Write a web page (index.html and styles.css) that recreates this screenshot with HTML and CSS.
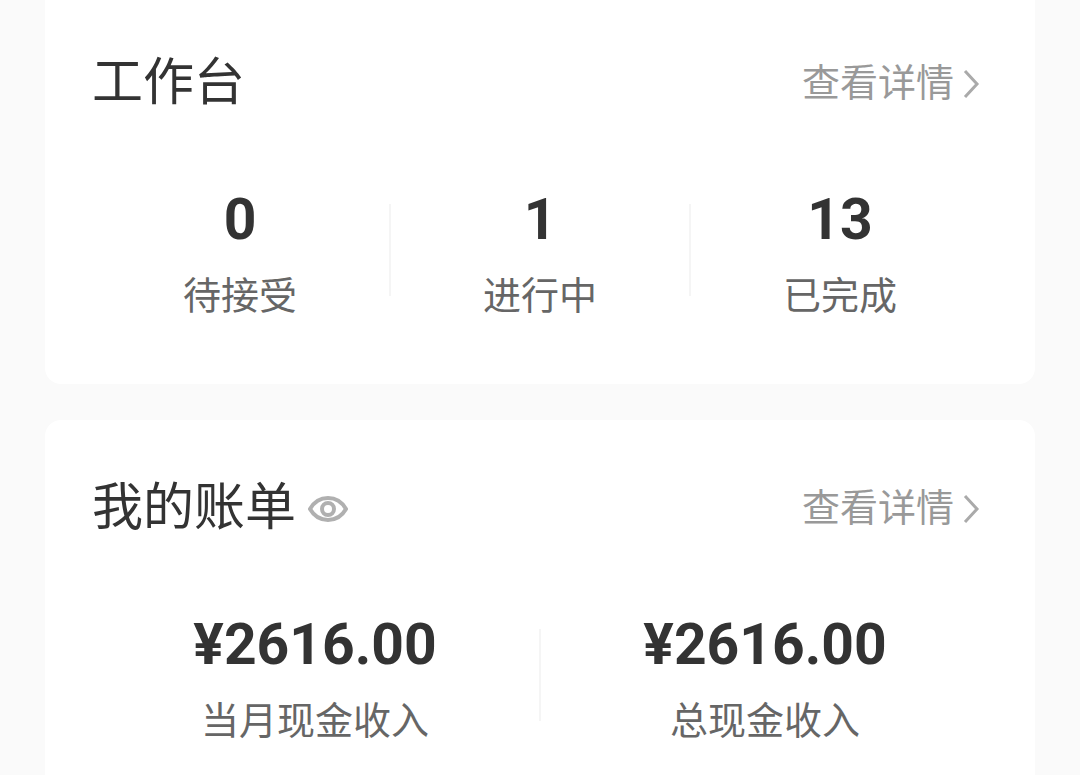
FILE: index.html
```html
<!DOCTYPE html>
<html lang="zh-CN">
<head>
    <meta charset="UTF-8">
    <meta name="viewport" content="width=device-width, initial-scale=1.0">
    <title>工作台</title>
    <link rel="stylesheet" href="styles.css">
</head>
<body>
    <main>
        <section class="card">
            <div class="card-header">
                <h2>工作台</h2>
                <a class="more" href="#">查看详情
                    <svg width="18" height="32" viewBox="0 0 18 32" aria-hidden="true"><path d="M3 4 L15 17 L3 30"/></svg>
                </a>
            </div>
            <div class="stats">
                <div class="stat">
                    <strong>0</strong>
                    <span>待接受</span>
                </div>
                <div class="stat">
                    <strong>1</strong>
                    <span>进行中</span>
                </div>
                <div class="stat">
                    <strong>13</strong>
                    <span>已完成</span>
                </div>
            </div>
        </section>

        <section class="card">
            <div class="card-header">
                <h2>我的账单</h2>
                <button class="eye" type="button" aria-label="显示或隐藏金额">
                    <svg width="40" height="28" viewBox="0 0 40 28" aria-hidden="true">
                        <path d="M2 14 C6 7 12 3 20 3 C28 3 34 7 38 14 C34 21 28 25 20 25 C12 25 6 21 2 14 Z"/>
                        <circle cx="20" cy="14" r="6"/>
                    </svg>
                </button>
                <a class="more" href="#">查看详情
                    <svg width="18" height="32" viewBox="0 0 18 32" aria-hidden="true"><path d="M3 4 L15 17 L3 30"/></svg>
                </a>
            </div>
            <div class="stats">
                <div class="stat">
                    <strong>¥2616.00</strong>
                    <span>当月现金收入</span>
                </div>
                <div class="stat">
                    <strong>¥2616.00</strong>
                    <span>总现金收入</span>
                </div>
            </div>
        </section>
    </main>
</body>
</html>
```
FILE: styles.css
```css
* {
    box-sizing: border-box;
}
body {
    margin: 0;
    background-color: #fafafa;
    color: #333;
    font-family: Roboto, "Noto Sans CJK SC", sans-serif;
    overflow: hidden;
}
main {
    display: flex;
    flex-direction: column;
    gap: 36px;
    padding: 0 45px;
}
.card {
    padding: 50px 45px 60px;
    background-color: #fff;
    border-radius: 16px;
}
.card:first-child {
    border-radius: 0 0 16px 16px;
    padding-top: 45px;
}
.card-header {
    display: flex;
    align-items: center;
    height: 76px;
    padding: 0 10px 0 2px;
}
h2 {
    margin: 0;
    font-size: 51px;
    font-weight: 400;
    line-height: 76px;
}
.more {
    display: flex;
    align-items: center;
    gap: 8px;
    margin-left: auto;
    color: #999;
    font-size: 38px;
    line-height: 56px;
    text-decoration: none;
}
.eye {
    display: flex;
    margin-left: 12px;
    padding: 2px 0 0;
    border: 0;
    background: none;
}
svg {
    fill: none;
    stroke: #aaa;
    stroke-width: 3;
}
.eye svg {
    stroke: #b0b0b0;
    stroke-width: 4;
}
.stats {
    display: flex;
    margin-top: 65px;
}
.stat {
    display: flex;
    flex: 1;
    flex-direction: column;
    align-items: center;
    gap: 14px;
    position: relative;
}
.stat + .stat::before {
    content: "";
    position: absolute;
    top: 18px;
    left: -1px;
    width: 2px;
    height: 92px;
    background-color: #f5f5f5;
}
.stat strong {
    font-size: 57px;
    font-weight: 700;
    line-height: 68px;
}
.stat span {
    color: #666;
    font-size: 38px;
    line-height: 56px;
}
```
